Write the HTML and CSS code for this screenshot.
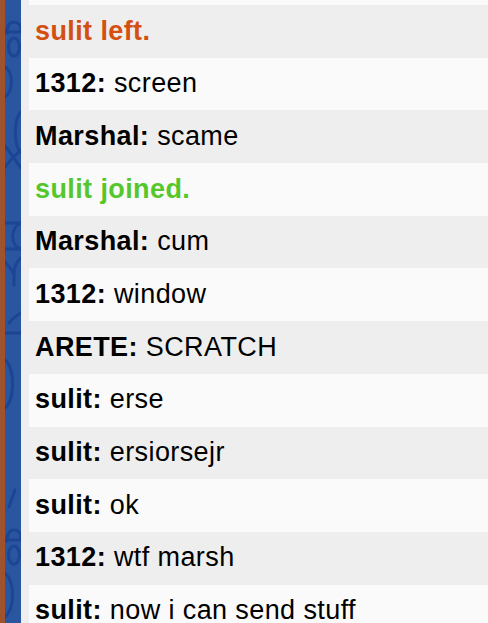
FILE: index.html
```html
<!DOCTYPE html>
<html>
<head>
<meta charset="utf-8">
<link rel="stylesheet" href="styles.css">
</head>
<body>
<div class="edge"></div>
<div class="band">
  <svg width="16" height="623" viewBox="0 0 16 623" fill="none" stroke="#1c4596" stroke-width="3" stroke-linecap="round">
    <path d="M2 33 C2 24 6 22 9 22 C13 22 16 25 16 30"/>
    <path d="M0 32 L16 32"/>
    <ellipse cx="9" cy="47" rx="5.5" ry="9"/>
    <path d="M0 67 C8 72 9 90 0 97"/>
    <path d="M16 112 C9 118 8 145 16 153"/>
    <path d="M0 146 C5 152 10 160 16 168"/>
    <path d="M0 167 C5 160 10 155 16 150"/>
    <path d="M0 223 L16 223"/>
    <path d="M16 223 C6 226 4 245 16 249"/>
    <path d="M0 249 L16 249"/>
    <path d="M16 258 C11 262 9 268 9 274 L9 285"/>
    <path d="M0 262 C4 266 7 270 9 274"/>
    <path d="M4 323 C8 318 12 315 16 313"/>
    <path d="M0 333 L16 333"/>
    <path d="M0 360 C10 368 10 400 0 408"/>
    <path d="M4 507 L10 490"/>
    <path d="M2 541 C2 532 6 530 9 530 C13 530 16 533 16 538"/>
    <path d="M0 540 L16 540"/>
    <ellipse cx="9" cy="555" rx="5.5" ry="9"/>
    <path d="M0 573 C10 582 10 608 0 617"/>
  </svg>
</div>
<main class="chat">
  <div class="log">
    <div class="msg dark"><span class="left">sulit left.</span></div>
    <div class="msg light"><b>1312:</b> screen</div>
    <div class="msg dark"><b>Marshal:</b> scame</div>
    <div class="msg light"><span class="joined">sulit joined.</span></div>
    <div class="msg dark"><b>Marshal:</b> cum</div>
    <div class="msg light"><b>1312:</b> window</div>
    <div class="msg dark"><b>ARETE:</b> SCRATCH</div>
    <div class="msg light"><b>sulit:</b> erse</div>
    <div class="msg dark"><b>sulit:</b> ersiorsejr</div>
    <div class="msg light"><b>sulit:</b> ok</div>
    <div class="msg dark"><b>1312:</b> wtf marsh</div>
    <div class="msg light"><b>sulit:</b> now i can send stuff</div>
  </div>
</main>
</body>
</html>
```
FILE: styles.css
```css
html, body {
  margin: 0;
  height: 100%;
  overflow: hidden;
}
body {
  display: flex;
  background: #eeeeee;
  font-family: "Liberation Sans", Arial, sans-serif;
}
.edge {
  width: 5px;
  flex: none;
  background: #a0522d;
}
.band {
  width: 16px;
  flex: none;
  background: #2a56a0;
  overflow: hidden;
}
.band svg {
  display: block;
}
.chat {
  flex: 1;
  min-width: 0;
  background: #eeeeee;
  padding-left: 8px;
  overflow: hidden;
}
.log::before {
  content: "";
  display: block;
  height: 5px;
  background: #fafafa;
}
.msg {
  padding: 10.6px 6px 11.4px;
  font-size: 27px;
  line-height: 30.7px;
  letter-spacing: 0.4px;
  color: #000;
  white-space: nowrap;
}
.msg b {
  font-weight: bold;
}
.light {
  background: #fafafa;
}
.dark {
  background: #eeeeee;
}
.left {
  color: #d35010;
  font-weight: bold;
}
.joined {
  color: #55c72b;
  font-weight: bold;
}
```
